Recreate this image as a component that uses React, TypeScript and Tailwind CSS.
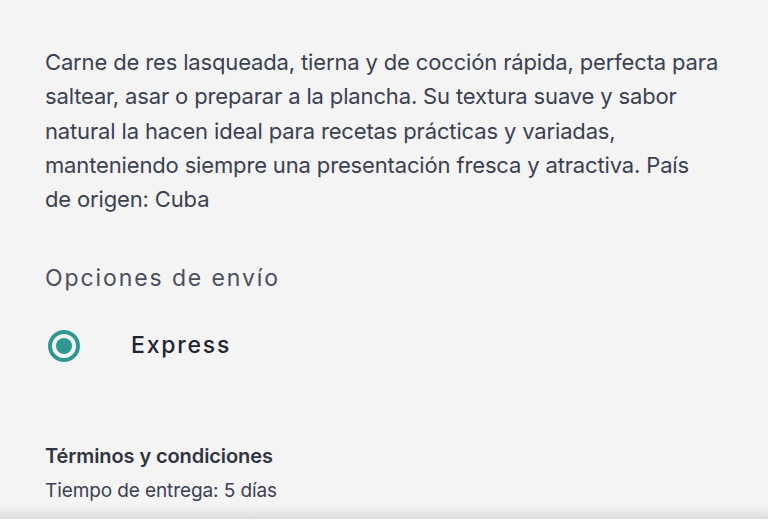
import React from 'react';

export default function App() {
  return (
    <div
      className="relative h-[521px] w-[768px] overflow-hidden bg-[#f4f4f5]"
      style={{ fontFamily: 'Inter, "Noto Sans", sans-serif' }}
    >
      <div className="px-[45px] pt-[45px]">
        {/* Description */}
        <p className="text-[22px] leading-[34.3px] tracking-[-0.15px] text-[#3b4150]">
          Carne de res lasqueada, tierna y de cocción rápida, perfecta para
          <br />
          saltear, asar o preparar a la plancha. Su textura suave y sabor
          <br />
          natural la hacen ideal para recetas prácticas y variadas,
          <br />
          manteniendo siempre una presentación fresca y atractiva. País
          <br />
          de origen: Cuba
        </p>

        {/* Shipping options */}
        <h2 className="mt-[47px] text-[23px] leading-[30px] tracking-[1.9px] text-[#4a505c]">
          Opciones de envío
        </h2>
        <div className="mt-[35px] flex items-center">
          <div className="ml-[3px] flex h-[32px] w-[32px] items-center justify-center rounded-full border-[4px] border-[#2f9893]">
            <div className="h-[16px] w-[16px] rounded-full bg-[#2f9893]" />
          </div>
          <span className="ml-[51px] text-[23px] font-medium tracking-[1.8px] text-[#1f2430]">
            Express
          </span>
        </div>

        {/* Terms */}
        <h3 className="mt-[80px] text-[20px] font-semibold leading-[26px] tracking-[-0.1px] text-[#2f3440]">
          Términos y condiciones
        </h3>
        <p className="mt-[9px] text-[19px] leading-[26px] tracking-[-0.1px] text-[#3b4150]">
          Tiempo de entrega: 5 días
        </p>
      </div>

      {/* Bottom bar shadow */}
      <div className="absolute bottom-0 left-0 right-0">
        <div className="h-[14px] bg-gradient-to-b from-[#f4f4f5] to-[#dcdcdc]" />
        <div className="h-[2px] bg-white" />
      </div>
    </div>
  );
}
